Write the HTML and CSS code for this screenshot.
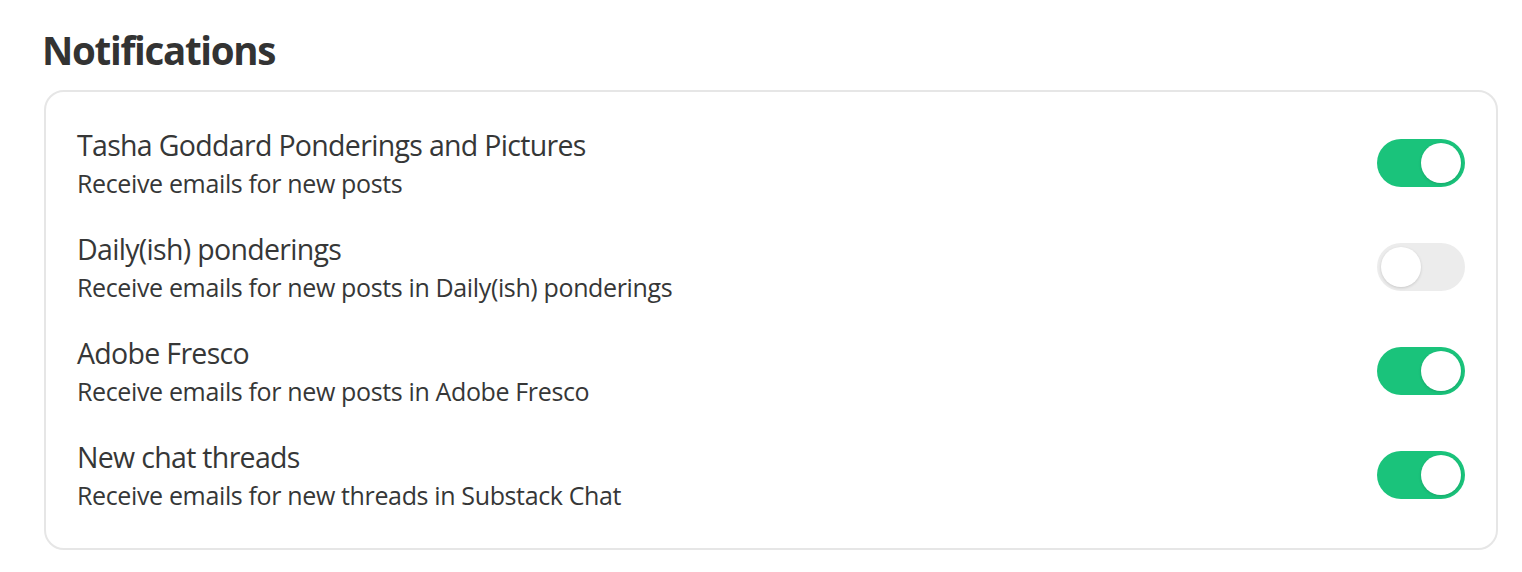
FILE: index.html
```html
<!DOCTYPE html>
<html>
<head>
<meta charset="utf-8">
<link rel="stylesheet" href="styles.css">
</head>
<body>
<div class="page">
  <h1 class="heading">Notifications</h1>
  <div class="card">
    <div class="row">
      <div class="text">
        <div class="title">Tasha Goddard Ponderings and Pictures</div>
        <div class="sub">Receive emails for new posts</div>
      </div>
      <div class="toggle on"><span class="knob"></span></div>
    </div>
    <div class="row">
      <div class="text">
        <div class="title">Daily(ish) ponderings</div>
        <div class="sub">Receive emails for new posts in Daily(ish) ponderings</div>
      </div>
      <div class="toggle"><span class="knob"></span></div>
    </div>
    <div class="row">
      <div class="text">
        <div class="title">Adobe Fresco</div>
        <div class="sub">Receive emails for new posts in Adobe Fresco</div>
      </div>
      <div class="toggle on"><span class="knob"></span></div>
    </div>
    <div class="row">
      <div class="text">
        <div class="title">New chat threads</div>
        <div class="sub">Receive emails for new threads in Substack Chat</div>
      </div>
      <div class="toggle on"><span class="knob"></span></div>
    </div>
  </div>
</div>
</body>
</html>
```
FILE: styles.css
```css
html, body {
  margin: 0;
  padding: 0;
  background: #ffffff;
}
.page {
  padding: 22px 24px 0 44px;
  font-family: "Open Sans", "Noto Sans", sans-serif;
  color: #363737;
}
.heading {
  margin: 0 0 12px -2px;
  font-size: 38.5px;
  line-height: 56px;
  font-weight: 700;
  letter-spacing: -1.3px;
  color: #333333;
}
.card {
  border: 2px solid #e6e6e6;
  border-radius: 20px;
  padding: 33px 31px 35px 31px;
  display: flex;
  flex-direction: column;
  gap: 28px;
}
.row {
  display: flex;
  align-items: center;
  justify-content: space-between;
}
.title {
  font-size: 28.5px;
  line-height: 40px;
  letter-spacing: -0.68px;
}
.sub {
  font-size: 25px;
  line-height: 36px;
  letter-spacing: -0.36px;
}
.toggle {
  width: 88px;
  height: 48px;
  border-radius: 24px;
  background: #ececec;
  padding: 4px;
  box-sizing: border-box;
  display: flex;
  justify-content: flex-start;
}
.toggle.on {
  background: #1ac37b;
  justify-content: flex-end;
}
.knob {
  width: 40px;
  height: 40px;
  border-radius: 50%;
  background: #ffffff;
  box-shadow: 0 1px 3px rgba(0,0,0,0.15);
}
```
